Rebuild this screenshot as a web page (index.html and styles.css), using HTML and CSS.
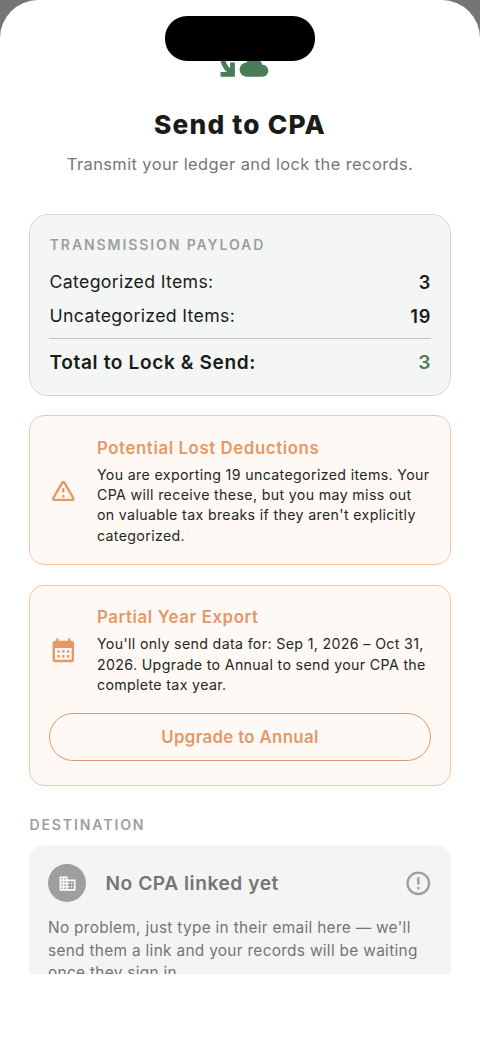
FILE: index.html
```html
<!DOCTYPE html>
<html lang="en">
<head>
<meta charset="utf-8">
<title>Send to CPA</title>
<link rel="stylesheet" href="styles.css">
</head>
<body>
<div class="sheet">
  <div class="island"></div>
  <main class="scroll">
    <svg class="hero-icon" viewBox="0 0 24 24"><path d="M21.5 14.98c-.02 0-.03 0-.05.01C21.2 13.3 19.76 12 18 12c-1.4 0-2.6.83-3.16 2.02C13.26 14.1 12 15.4 12 17c0 1.66 1.34 3 3 3l6.5-.02c1.38 0 2.5-1.12 2.5-2.5s-1.12-2.5-2.5-2.5zM10 4.26v2.09C7.67 7.18 6 9.39 6 12c0 1.77.78 3.34 2 4.44V14h2v6H4v-2h2.73C5.06 16.54 4 14.4 4 12c0-3.73 2.55-6.85 6-7.74zM20 6h-2.73c1.43 1.26 2.41 3.01 2.66 5h-2.02c-.23-1.36-.93-2.55-1.91-3.44V10h-2V4h6v2z"/></svg>
    <h1 class="title">Send to CPA</h1>
    <p class="subtitle">Transmit your ledger and lock the records.</p>

    <section class="payload">
      <h2 class="label">TRANSMISSION PAYLOAD</h2>
      <div class="row"><span>Categorized Items:</span><b>3</b></div>
      <div class="row"><span>Uncategorized Items:</span><b>19</b></div>
      <div class="row total"><span>Total to Lock &amp; Send:</span><b>3</b></div>
    </section>

    <section class="notice lost">
      <div class="notice-body">
        <svg class="icon" viewBox="0 0 24 24"><path d="M12 5.99L19.53 19H4.47L12 5.99M2.74 18c-.77 1.33.19 3 1.73 3h15.06c1.54 0 2.5-1.67 1.73-3L13.73 4.99c-.77-1.33-2.69-1.33-3.46 0L2.74 18zM11 11v2c0 .55.45 1 1 1s1-.45 1-1v-2c0-.55-.45-1-1-1s-1 .45-1 1zm0 5h2v2h-2z"/></svg>
        <div>
          <h3 class="notice-title">Potential Lost Deductions</h3>
          <p class="notice-text">You are exporting 19 uncategorized items. Your<br>CPA will receive these, but you may miss out<br>on valuable tax breaks if they aren't explicitly<br>categorized.</p>
        </div>
      </div>
    </section>

    <section class="notice partial">
      <div class="notice-body">
        <svg class="icon" viewBox="0 0 24 24"><path d="M19 4h-1V2h-2v2H8V2H6v2H5c-1.11 0-1.99.9-1.99 2L3 20c0 1.1.89 2 2 2h14c1.1 0 2-.9 2-2V6c0-1.1-.9-2-2-2zm0 16H5V10h14v10zM9 14H7v-2h2v2zm4 0h-2v-2h2v2zm4 0h-2v-2h2v2zm-8 4H7v-2h2v2zm4 0h-2v-2h2v2zm4 0h-2v-2h2v2z"/></svg>
        <div>
          <h3 class="notice-title">Partial Year Export</h3>
          <p class="notice-text">You'll only send data for: Sep 1, 2026 – Oct 31,<br>2026. Upgrade to Annual to send your CPA the<br>complete tax year.</p>
        </div>
      </div>
      <button class="upgrade">Upgrade to Annual</button>
    </section>

    <h2 class="label destination-label">DESTINATION</h2>
    <section class="destination">
      <div class="cpa">
        <div class="avatar"><svg viewBox="0 0 24 24"><path d="M12 7V3H2v18h20V7H12zM6 19H4v-2h2v2zm0-4H4v-2h2v2zm0-4H4V9h2v2zm0-4H4V5h2v2zm4 12H8v-2h2v2zm0-4H8v-2h2v2zm0-4H8V9h2v2zm0-4H8V5h2v2zm10 12h-8v-2h2v-2h-2v-2h2v-2h-2V9h8v10zm-2-8h-2v2h2v-2zm0 4h-2v2h2v-2z"/></svg></div>
        <h3 class="cpa-name">No CPA linked yet</h3>
        <svg class="icon muted" viewBox="0 0 24 24"><path d="M11 15h2v2h-2zm0-8h2v6h-2zm.99-5C6.47 2 2 6.48 2 12s4.47 10 9.99 10C17.52 22 22 17.52 22 12S17.52 2 11.99 2zM12 20c-4.42 0-8-3.58-8-8s3.58-8 8-8 8 3.58 8 8-3.58 8-8 8z"/></svg>
      </div>
      <p class="cpa-text">No problem, just type in their email here — we'll<br>send them a link and your records will be waiting<br>once they sign in.</p>
    </section>
  </main>
</div>
</body>
</html>
```
FILE: styles.css
```css
* { box-sizing: border-box; }
body { margin: 0; background: #757575; font-family: Inter, "Liberation Sans", sans-serif; color: #1a1c19; }
h1, h2, h3, p { margin: 0; }
.sheet { position: relative; height: 1043px; overflow: hidden; background: #fff; border-radius: 38px 38px 0 0; }
.island { position: absolute; z-index: 1; left: 165px; top: 16.4px; width: 150px; height: 44.2px; border-radius: 22px; background: #000; }
.scroll { height: 973.5px; overflow: hidden; padding: 28.5px 29px 0; display: flex; flex-direction: column; }
.scroll > * { flex-shrink: 0; }
.hero-icon { width: 57.3px; height: 57.3px; align-self: center; fill: #4a7c59; }
.title { margin-top: 23px; font-size: 26.3px; line-height: 32px; font-weight: 850; letter-spacing: 1.2px; text-align: center; }
.subtitle { margin-top: 11.2px; font-size: 16.4px; line-height: 24px; letter-spacing: .43px; text-align: center; color: #757575; }
.label { font-size: 14.1px; line-height: 18px; font-weight: 600; letter-spacing: 1.86px; color: #9e9e9e; }
.payload { margin-top: 38px; height: 182px; padding: 21px 19px 0; border: 1px solid #d5d7d5; border-radius: 19px; background: #f4f6f5; }
.payload .label { padding-left: .7px; }
.row { display: flex; justify-content: space-between; font-size: 17.7px; line-height: 24px; letter-spacing: .33px; margin-top: 10.4px; }
.row span { padding-left: .6px; }
.label + .row { margin-top: 15.6px; }
.row b { font-size: 18.2px; font-weight: 620; letter-spacing: .9px; margin-right: -.3px; }
.row.total { margin-top: 9.9px; padding-top: 11.2px; border-top: 1px solid #c2c4b9; font-size: 19.1px; font-weight: 640; letter-spacing: .62px; }
.row.total b { font-size: 19.3px; color: #4a7c59; margin-right: -.3px; }
.notice { margin-top: 19.5px; padding: 20.5px 19px 0; border: 1px solid #f1c5a8; border-radius: 15px; background: #fef9f5; }
.lost { height: 150px; }
.partial { height: 201px; }
.notice-body { display: grid; grid-template-columns: 28.65px 1fr; column-gap: 19.3px; align-items: center; }
.icon { display: block; width: 28.65px; height: 28.65px; fill: #e59866; }
.notice .icon { margin-bottom: 2px; }
.notice-title { font-size: 16.8px; line-height: 22px; font-weight: 620; letter-spacing: .61px; color: #e59866; }
.notice-text { margin-top: 5.8px; font-size: 14.2px; line-height: 20.3px; letter-spacing: .35px; white-space: nowrap; color: #252724; }
.upgrade { display: block; width: 382px; height: 48px; margin-top: 18.3px; padding: 0; border: 1px solid #e59866; border-radius: 24px; background: none; font: 620 16.8px/24px Inter, "Liberation Sans", sans-serif; letter-spacing: .36px; color: #e59866; }
.destination-label { margin-top: 30.4px; padding-left: .4px; }
.destination { margin-top: 10.6px; height: 180px; padding: 19px 18.5px 19px 19px; border-radius: 15px; background: #f4f4f4; color: #757575; }
.cpa { display: grid; grid-template-columns: 38.2px 1fr 28.65px; column-gap: 19.3px; align-items: center; }
.avatar { width: 38.2px; height: 38.2px; border-radius: 50%; background: #9e9e9e; display: grid; place-items: center; }
.avatar svg { display: block; width: 19.1px; height: 19.1px; fill: #fff; }
.cpa-name { padding-top: .7px; font-size: 19.2px; line-height: 26px; font-weight: 620; letter-spacing: .53px; }
.muted { fill: #9e9e9e; }
.cpa-text { margin-top: 15px; font-size: 15.4px; line-height: 22.5px; letter-spacing: .31px; white-space: nowrap; }
```
